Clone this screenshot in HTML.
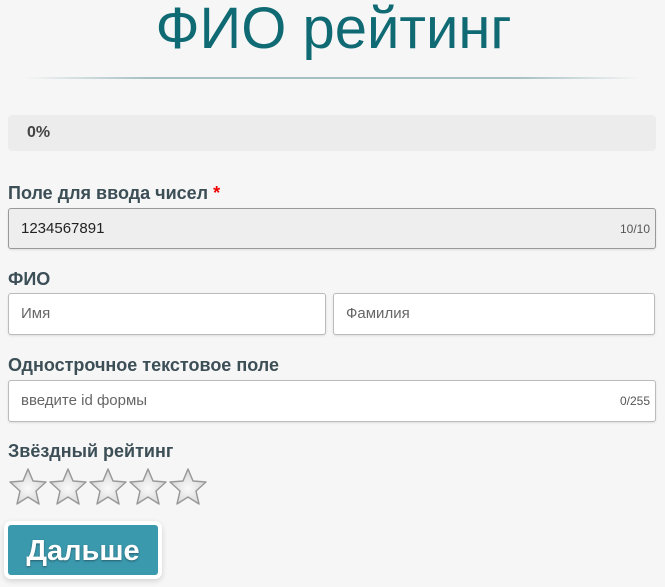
<!DOCTYPE html>
<html><head><meta charset="utf-8"><style>
body{margin:0;background:#f6f6f6;font-family:"Liberation Sans","DejaVu Sans",sans-serif;width:665px;height:587px;overflow:hidden;position:relative;color:#3c4e56}
.abs{position:absolute}
h1{position:absolute;left:0;width:665px;top:-5px;margin:0;text-align:center;font-weight:normal;font-size:58px;color:#0f6a73;padding-left:2px;box-sizing:border-box}
.line{left:25px;width:615px;top:77px;height:2px;background:linear-gradient(90deg,rgba(15,90,100,0),rgba(15,90,100,.35) 20%,rgba(15,90,100,.35) 80%,rgba(15,90,100,0))}
.prog{left:8px;top:115px;width:648px;height:36px;background:#ececec;border-radius:4px;font-weight:bold;font-size:16px;line-height:36px;padding-left:19px;box-sizing:border-box;color:#444}
.lbl{left:8px;font-weight:bold;font-size:18px;color:#3c4e56}
.inp{box-sizing:border-box;border:1px solid #bbb;border-radius:3px;background:#fff;font-size:15px;line-height:40px;padding-left:12px;color:#666;box-shadow:0 1px 2px rgba(0,0,0,.1)}
.cnt{position:absolute;right:5px;top:0;font-size:12px;color:#555}
.btn{left:8px;top:525px;width:150px;height:50px;background:#3b99ae;border-radius:3px;box-shadow:0 0 0 4px #fff,0 2px 6px 4px rgba(0,0,0,.15);color:#fff;font-weight:bold;font-size:29px;line-height:52px;text-align:center;text-shadow:0 1px 2px rgba(0,0,0,.4)}
</style></head><body>
<h1>ФИО рейтинг</h1>
<div class="abs line"></div>
<div class="abs prog">0%</div>
<div class="abs lbl" style="top:183px">Поле для ввода чисел <span style="color:#e00">*</span></div>
<div class="abs inp" style="left:8px;top:208px;width:648px;height:41px;background:#eee;color:#222;border-color:#999">1234567891<span class="cnt">10/10</span></div>
<div class="abs lbl" style="top:269px">ФИО</div>
<div class="abs inp" style="left:8px;top:293px;width:318px;height:42px">Имя</div>
<div class="abs inp" style="left:333px;top:293px;width:322px;height:42px">Фамилия</div>
<div class="abs lbl" style="top:355px">Однострочное текстовое поле</div>
<div class="abs inp" style="left:8px;top:380px;width:648px;height:42px">введите id формы<span class="cnt">0/255</span></div>
<div class="abs lbl" style="top:441px">Звёздный рейтинг</div>
<svg class="abs" style="left:8px;top:467px" width="202" height="40" viewBox="0 0 202 40">
<defs><radialGradient id="g" cx="50%" cy="55%" r="55%"><stop offset="0" stop-color="#fafafa"/><stop offset="1" stop-color="#d4d4d4"/></radialGradient>
<path id="s" d="M20 2 L25 14 L38 15 L28 24 L31 37 L20 30 L9 37 L12 24 L2 15 L15 14 Z" fill="url(#g)" stroke="#999" stroke-width="1.5" stroke-linejoin="round"/></defs>
<use href="#s" x="0"/><use href="#s" x="40"/><use href="#s" x="80"/><use href="#s" x="120"/><use href="#s" x="160"/>
</svg>
<div class="abs btn">Дальше</div>
</body></html>
